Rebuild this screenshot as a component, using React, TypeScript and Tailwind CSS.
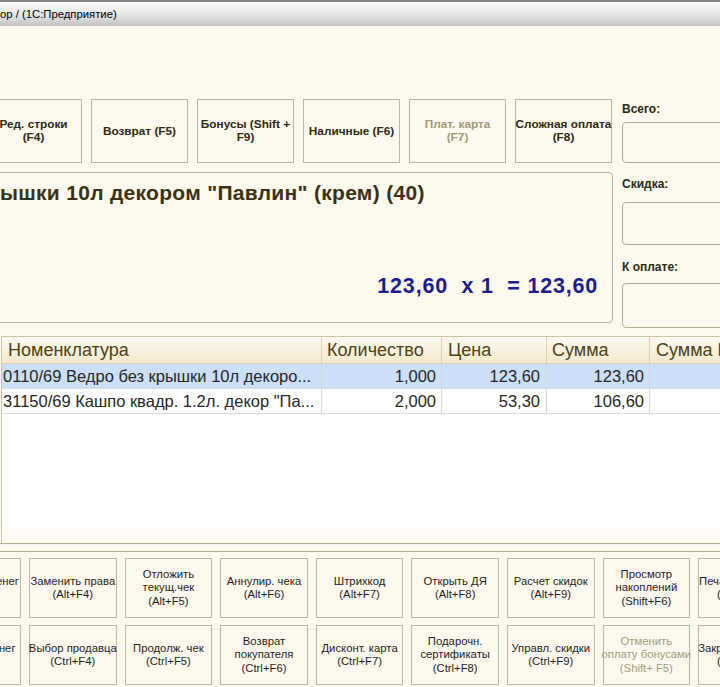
const topButtons: { lines: string[]; disabled?: boolean }[] = [
  { lines: ['Ред. строки', '(F4)'] },
  { lines: ['Возврат (F5)'] },
  { lines: ['Бонусы (Shift +', 'F9)'] },
  { lines: ['Наличные (F6)'] },
  { lines: ['Плат. карта', '(F7)'], disabled: true },
  { lines: ['Сложная оплата', '(F8)'] },
];

const bottomRow1: { lines: string[]; disabled?: boolean }[] = [
  { lines: ['Внесение денег', '(Alt+F3)'] },
  { lines: ['Заменить права', '(Alt+F4)'] },
  { lines: ['Отложить', 'текущ.чек', '(Alt+F5)'] },
  { lines: ['Аннулир. чека', '(Alt+F6)'] },
  { lines: ['Штрихкод', '(Alt+F7)'] },
  { lines: ['Открыть ДЯ', '(Alt+F8)'] },
  { lines: ['Расчет скидок', '(Alt+F9)'] },
  { lines: ['Просмотр', 'накоплений', '(Shift+F6)'] },
  { lines: ['Печать X-отчета', '(Shift+F7)'] },
];

const bottomRow2: { lines: string[]; disabled?: boolean }[] = [
  { lines: ['Изъятие денег', '(Ctrl+F3)'] },
  { lines: ['Выбор продавца', '(Ctrl+F4)'] },
  { lines: ['Продолж. чек', '(Ctrl+F5)'] },
  { lines: ['Возврат', 'покупателя', '(Ctrl+F6)'] },
  { lines: ['Дисконт. карта', '(Ctrl+F7)'] },
  { lines: ['Подарочн.', 'сертификаты', '(Ctrl+F8)'] },
  { lines: ['Управл. скидки', '(Ctrl+F9)'] },
  { lines: ['Отменить', 'оплату бонусами', '(Shift+ F5)'], disabled: true },
  { lines: ['Закрытие смены', '(Shift+F8)'] },
];

const rows = [
  { name: '0110/69 Ведро без крышки 10л декоро...', qty: '1,000', price: '123,60', sum: '123,60', selected: true },
  { name: '31150/69 Кашпо квадр. 1.2л. декор "Па...', qty: '2,000', price: '53,30', sum: '106,60', selected: false },
];

function BottomButtonRow({ items }: { items: { lines: string[]; disabled?: boolean }[] }) {
  return (
    <div className="flex gap-[8px] -ml-[66.6px] h-[60px]">
      {items.map((b, i) => (
        <div
          key={i}
          className={`w-[87.6px] shrink-0 flex flex-col items-center justify-center border border-[#bdb7a0] bg-[#fdf9ee] text-center text-[11.3px] leading-[13.5px] whitespace-nowrap ${
            b.disabled ? 'text-[#a09c84]' : 'text-[#1e1e1e]'
          }`}
        >
          {b.lines.map((l, j) => (
            <span key={j}>{l}</span>
          ))}
        </div>
      ))}
    </div>
  );
}

export default function App() {
  return (
    <div className="w-[720px] h-[687px] overflow-hidden bg-[#fdf9ee] font-['Liberation_Sans',Arial,sans-serif]">
      {/* Title bar */}
      <div className="h-[26px] border-t-2 border-[#858585] bg-gradient-to-b from-[#fbfbfb] via-[#e8e8e8] to-[#c2c2c2] flex items-center text-[11.3px] text-black whitespace-nowrap">
        ор / (1С:Предприятие)
      </div>

      {/* Top section */}
      <div className="flex gap-[9px] mt-[73px] -ml-[15px] h-[229px]">
        <div className="w-[628px] shrink-0 flex flex-col gap-[9px]">
          <div className="flex gap-[9px] h-[64px]">
            {topButtons.map((b, i) => (
              <div
                key={i}
                className={`w-[97px] shrink-0 flex flex-col items-center justify-center border border-[#bab49d] text-center text-[11.8px] font-bold leading-[13px] whitespace-nowrap ${
                  b.disabled ? 'text-[#9e9a7a]' : 'text-[#2c2a12]'
                }`}
              >
                {b.lines.map((l, j) => (
                  <span key={j}>{l}</span>
                ))}
              </div>
            ))}
          </div>
          <div className="h-[151px] border border-[#b8b29b] rounded-[4px] flex flex-col pl-[14px] pr-[14px]">
            <div className="mt-[7px] text-[21px] font-bold tracking-[0.3px] text-[#3a3212] whitespace-nowrap leading-[26px]">
              ышки 10л декором "Павлин" (крем) (40)
            </div>
            <div className="mt-[67px] text-right text-[21.5px] font-bold tracking-[0.8px] text-[#1c1c8e] whitespace-pre leading-[26px]">
              123,60  x 1  = 123,60
            </div>
          </div>
        </div>
        <div className="w-[120px] shrink-0 flex flex-col text-[12px] font-bold text-[#2c2a12]">
          <div className="h-[20px] leading-[20px]">Всего:</div>
          <div className="mt-[3px] h-[41px] border border-[#b3ad96] rounded-[4px]" />
          <div className="mt-[11px] h-[20px] leading-[20px]">Скидка:</div>
          <div className="mt-[8px] h-[43px] border border-[#b3ad96] rounded-[4px]" />
          <div className="mt-[12px] h-[20px] leading-[20px]">К оплате:</div>
          <div className="mt-[6px] h-[45px] border border-[#b3ad96] rounded-[4px]" />
        </div>
      </div>

      {/* Table */}
      <div className="mt-[8px] h-[207px] ml-[1px] border-l border-t border-[#c9c3aa] bg-gradient-to-b from-white from-[90%] to-[#fdf9ee] overflow-hidden">
        <div className="flex h-[27px] bg-gradient-to-b from-[#fdfaf1] to-[#f3e9cd] border-b border-[#d9d0b2] text-[18px] text-[#4c4114] whitespace-nowrap">
          <div className="w-[320px] shrink-0 pl-[6px] flex items-center border-r border-[#d9d0b2]">Номенклатура</div>
          <div className="w-[120px] shrink-0 pl-[5px] flex items-center border-r border-[#d9d0b2]">Количество</div>
          <div className="w-[105px] shrink-0 pl-[6px] flex items-center border-r border-[#d9d0b2]">Цена</div>
          <div className="w-[103px] shrink-0 pl-[5px] flex items-center border-r border-[#d9d0b2]">Сумма</div>
          <div className="w-[120px] shrink-0 pl-[6px] flex items-center">Сумма Н</div>
        </div>
        {rows.map((r, i) => (
          <div
            key={i}
            className={`flex h-[25px] border-b border-[#dcdcdc] text-[16.5px] text-[#262626] whitespace-nowrap ${
              r.selected ? 'bg-[#cbdff8]' : 'bg-white'
            }`}
          >
            <div className="w-[320px] shrink-0 pl-[1px] flex items-center border-r border-[#d6d6d6] overflow-hidden">{r.name}</div>
            <div className="w-[120px] shrink-0 pr-[5px] flex items-center justify-end border-r border-[#d6d6d6]">{r.qty}</div>
            <div className="w-[105px] shrink-0 pr-[6px] flex items-center justify-end border-r border-[#d6d6d6]">{r.price}</div>
            <div className="w-[103px] shrink-0 pr-[5px] flex items-center justify-end border-r border-[#d6d6d6]">{r.sum}</div>
            <div className="w-[120px] shrink-0" />
          </div>
        ))}
      </div>

      {/* Bottom panel */}
      <div className="h-px bg-[#b3ad95]" />
      <div className="h-[7px]" />
      <div className="h-px bg-[#b3ad95]" />
      <div className="mt-[6px] flex flex-col gap-[7px]">
        <BottomButtonRow items={bottomRow1} />
        <BottomButtonRow items={bottomRow2} />
      </div>
    </div>
  );
}
